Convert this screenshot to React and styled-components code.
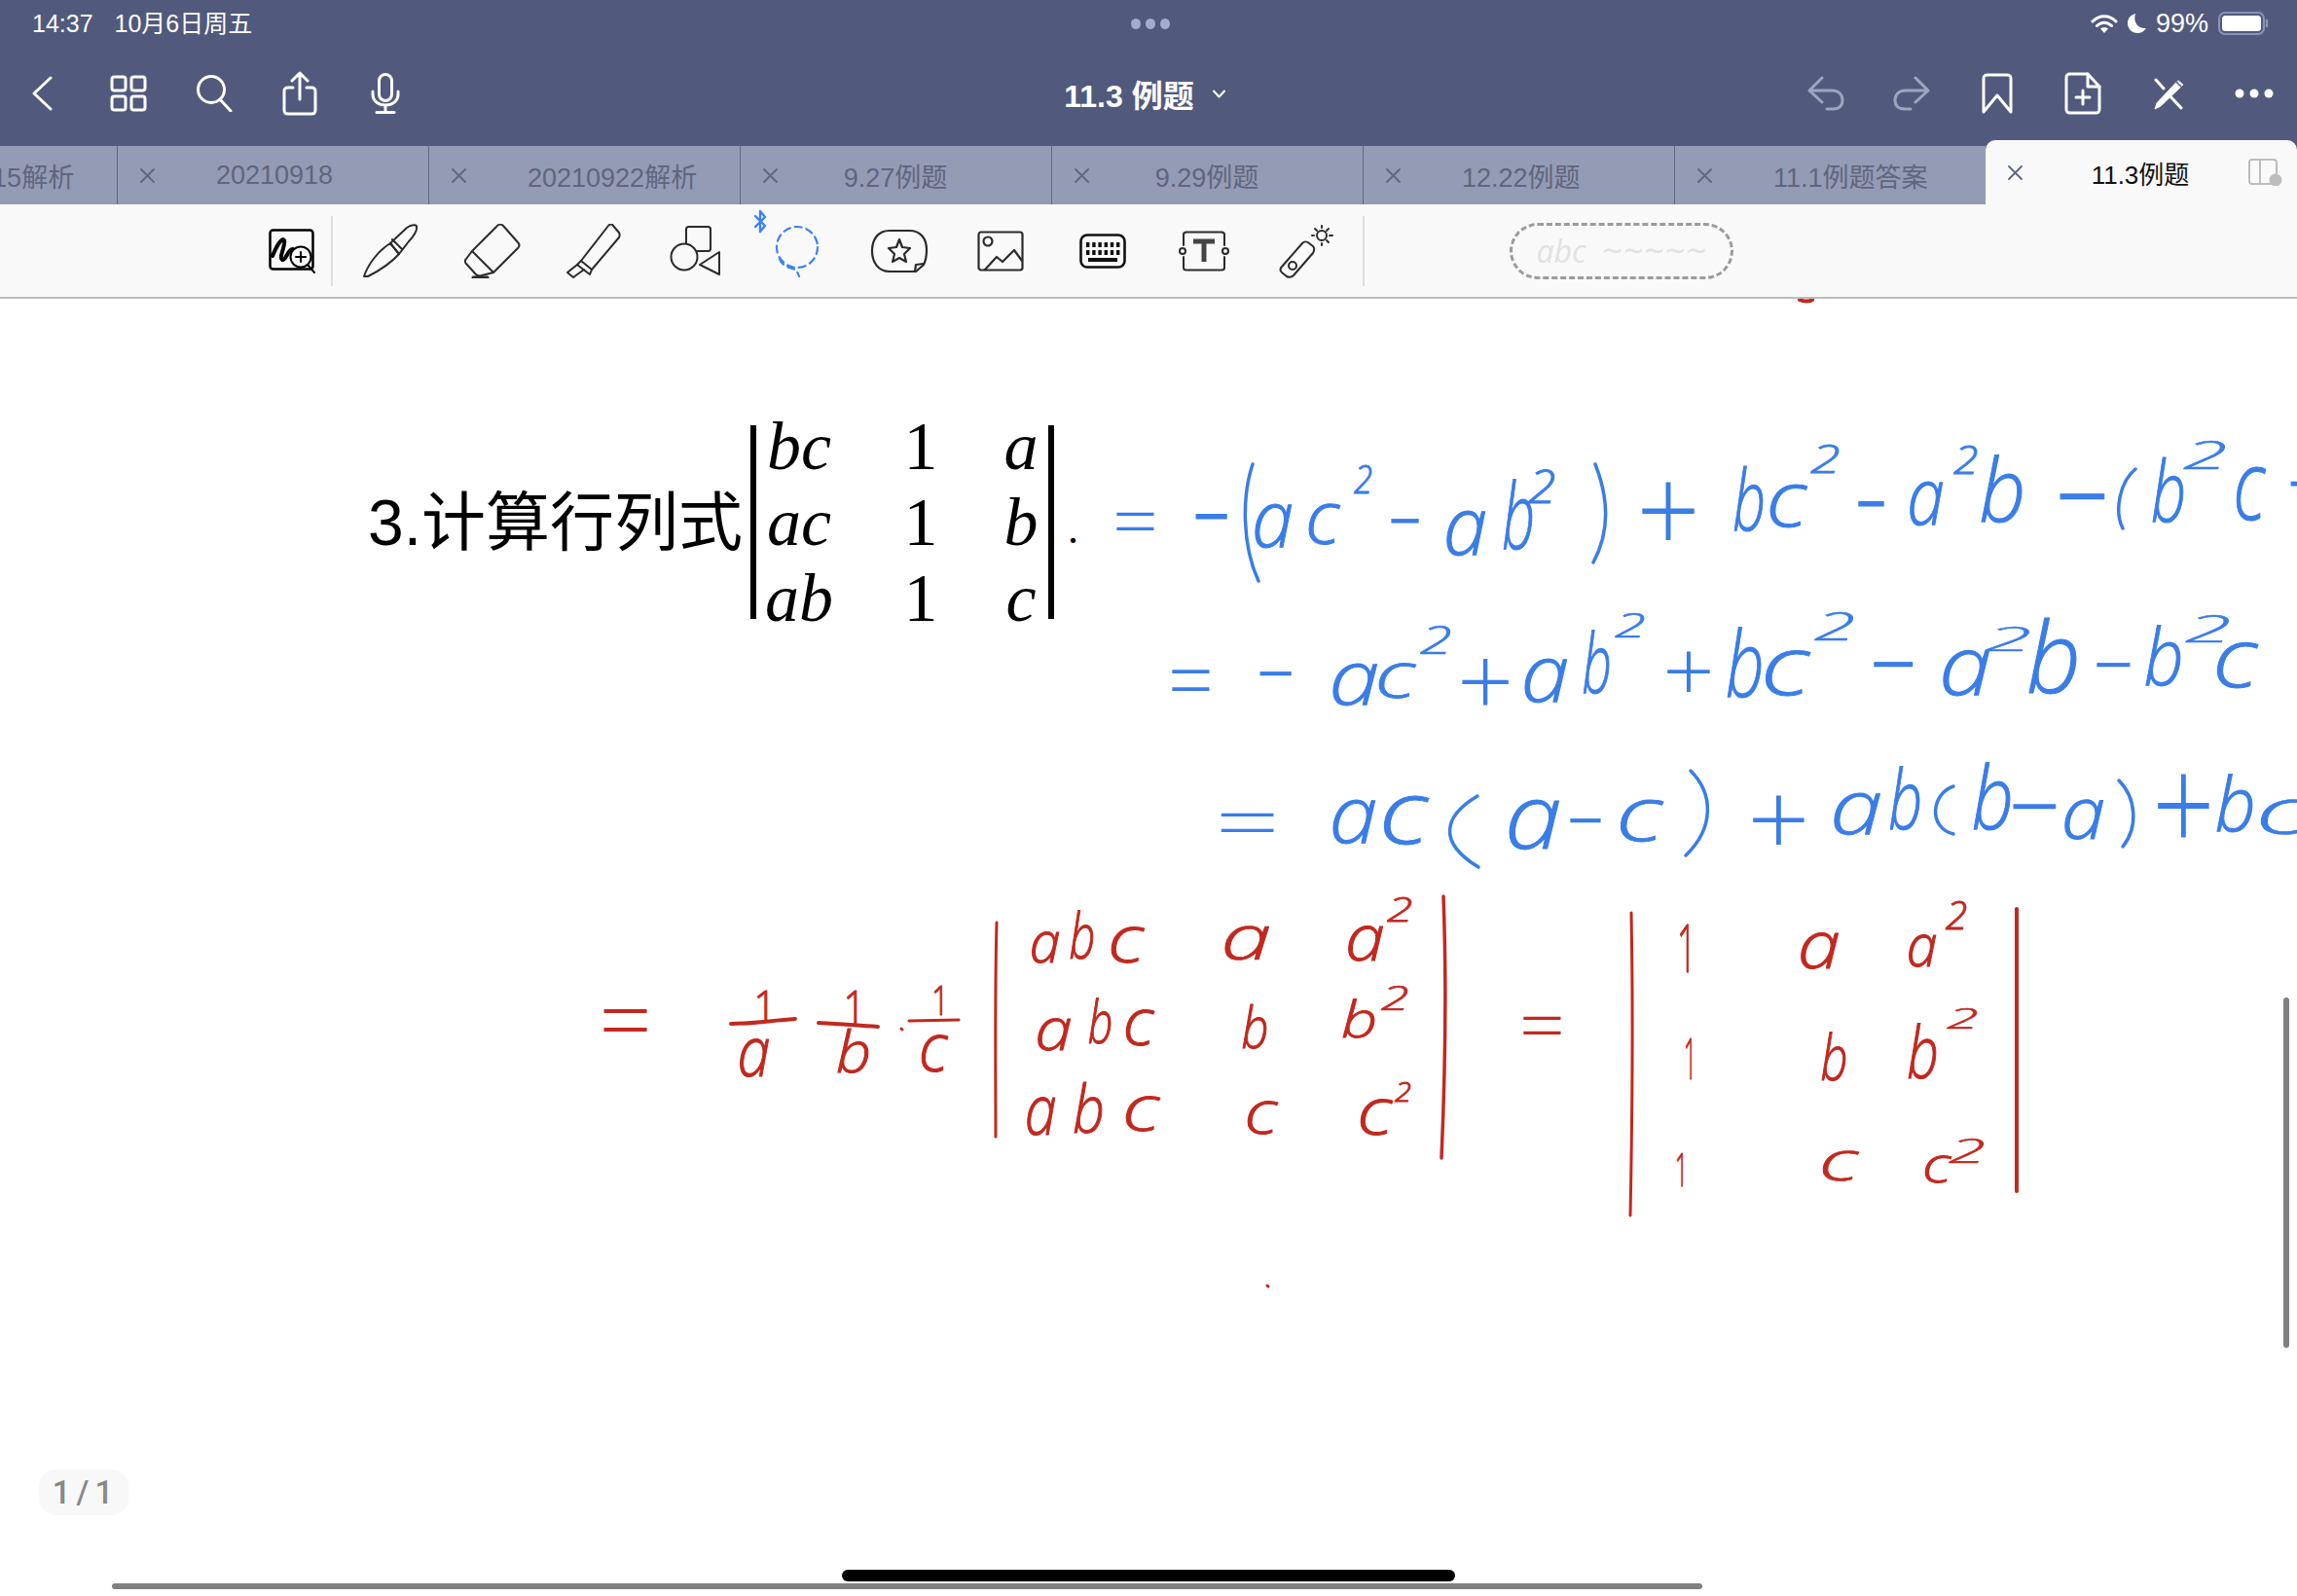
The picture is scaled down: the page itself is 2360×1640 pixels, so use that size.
import React from "react";
import styled, { createGlobalStyle } from "styled-components";

const GlobalStyle = createGlobalStyle`
  html, body { margin: 0; padding: 0; background: #fff; }
  body { font-family: "Liberation Sans", "Noto Sans CJK SC", sans-serif; }
`;

const Page = styled.div`
  position: relative;
  display: flex;
  flex-direction: column;
  width: 2360px;
  height: 1640px;
  overflow: hidden;
  background: #fff;
`;

const Header = styled.header`
  background: #515a7c;
  color: #fff;
  height: 150px;
`;

const StatusBar = styled.div`
  display: grid;
  grid-template-columns: 1fr auto 1fr;
  align-items: center;
  height: 48px;
  padding: 0 29px 0 33px;
`;

const StatusLeft = styled.div`
  display: flex;
  align-items: baseline;
  gap: 22px;
  font-size: 25px;
  line-height: 30px;
`;

const StatusRight = styled.div`
  display: flex;
  justify-content: flex-end;
  align-items: center;
  gap: 10px;
  font-size: 27px;
`;

const Grabber = styled.div`
  display: flex;
  gap: 5px;
  span {
    width: 10px;
    height: 11px;
    border-radius: 50%;
    background: #a3acd0;
  }
`;

const NavBar = styled.div`
  display: grid;
  grid-template-columns: 1fr auto 1fr;
  align-items: center;
  height: 102px;
  padding-bottom: 6px;
  box-sizing: border-box;
`;

const NavGroup = styled.div`
  display: flex;
  justify-content: ${(p) => (p.$end ? "flex-end" : "flex-start")};
`;

const NavSlot = styled.div`
  display: flex;
  align-items: center;
  justify-content: center;
  width: 88px;
  color: ${(p) => (p.$muted ? "#9ea5bf" : "#fff")};
`;

const Title = styled.div`
  display: flex;
  align-items: center;
  gap: 19px;
  margin-right: 8px;
  font-size: 32px;
  font-weight: 700;
`;

const Icon = styled.svg`
  display: block;
  flex: none;
  fill: none;
  color: ${(p) => p.$color || "inherit"};
  stroke: currentColor;
  stroke-linecap: round;
  stroke-linejoin: round;
`;

const TabRow = styled.nav`
  display: flex;
  align-items: flex-end;
  height: 60px;
  margin-left: -200px;
  background: #515a7c;
`;

const Tab = styled.div`
  display: flex;
  align-items: center;
  flex: none;
  box-sizing: border-box;
  width: 320px;
  height: ${(p) => (p.$active ? "66px" : "60px")};
  padding-left: 23px;
  background: ${(p) => (p.$active ? "#f9f9f9" : "#949bb4")};
  color: ${(p) => (p.$active ? "#111" : "#5f667d")};
  border-left: ${(p) => (p.$active ? "0" : "1px solid #5f6885")};
  border-radius: ${(p) => (p.$active ? "10px 10px 0 0" : "0")};
  font-size: ${(p) => (p.$active ? "26px" : "27px")};
  position: relative;
  z-index: ${(p) => (p.$active ? 1 : 0)};
`;

const TabLabel = styled.span`
  min-width: 116px;
  margin-left: 63px;
  text-align: center;
  white-space: nowrap;
`;

const TabAction = styled.div`
  margin-left: auto;
  margin-right: 15px;
  color: #bdbdbd;
`;

const Toolbar = styled.div`
  display: flex;
  align-items: center;
  box-sizing: border-box;
  height: 97px;
  padding-left: 276px;
  background: #f9f9f9;
  border-bottom: 2px solid #bdbdbd;
  color: #2b2b2b;
`;

const ToolSlot = styled.div`
  display: flex;
  align-items: center;
  justify-content: center;
  flex: none;
  width: 104.5px;
  position: relative;
`;

const ToolDivider = styled.div`
  flex: none;
  width: 2px;
  height: 72px;
  margin: ${(p) => p.$margin};
  background: #dedede;
`;

const BrushPreview = styled.div`
  display: flex;
  align-items: center;
  justify-content: center;
  gap: 16px;
  box-sizing: border-box;
  width: 230px;
  height: 58px;
  margin-left: 149px;
  border: 3px dashed #9b9b9b;
  border-radius: 29px;
  color: #e2e2e2;
  font: italic 400 32px "Open Sans", sans-serif;
`;

const BrushWave = styled.span`
  letter-spacing: 1px;
  font-size: 36px;
`;

const NoteCanvas = styled.main`
  position: relative;
  flex: 1;
  overflow: hidden;
  box-sizing: border-box;
  padding: 130px 0 0 378px;
`;

const Question = styled.div`
  display: flex;
  align-items: center;
  color: #000;
`;

const QuestionLabel = styled.div`
  font-size: 66px;
  line-height: 80px;
  margin-right: 8px;
  white-space: nowrap;
`;

const Determinant = styled.div`
  display: grid;
  grid-template-columns: 88px 162px 44px;
  grid-auto-rows: 78px;
  align-content: center;
  box-sizing: border-box;
  width: 312px;
  height: 199px;
  padding-right: 6px;
  border-left: 6px solid #000;
  border-right: 6px solid #000;
  font: 70px/78px "Liberation Serif", serif;
  text-align: center;
`;

const MathVar = styled.i`
  font-style: italic;
`;

const Period = styled.span`
  margin: 14px 0 0 14px;
  font: 44px/44px "Liberation Serif", serif;
`;

const InkLayer = styled.svg`
  position: absolute;
  left: 0;
  top: 0;
  width: 2360px;
  height: 1333px;
`;

const InkText = styled.text`
  font-family: "Open Sans", sans-serif;
  font-weight: 300;
  font-style: ${(p) => (p.$italic ? "italic" : "normal")};
  fill: ${(p) => p.$color};
  stroke: ${(p) => p.$color};
`;

const InkStroke = styled.path`
  fill: none;
  stroke: ${(p) => p.$color};
  stroke-width: ${(p) => p.$w || 3};
  stroke-linecap: round;
`;

const PageBadge = styled.div`
  position: absolute;
  left: 40px;
  top: 1510px;
  display: flex;
  align-items: center;
  justify-content: center;
  box-sizing: border-box;
  width: 92px;
  height: 47px;
  padding-left: 4px;
  border-radius: 18px;
  background: #f8f8f8;
  color: #888;
  font: 500 33px Roboto, sans-serif;
  letter-spacing: 6px;
`;

const VerticalScroll = styled.div`
  position: absolute;
  left: 2346px;
  top: 1025px;
  width: 6px;
  height: 360px;
  border-radius: 3px;
  background: #808080;
`;

const HorizontalScroll = styled.div`
  position: absolute;
  left: 115px;
  top: 1627px;
  width: 1634px;
  height: 6px;
  border-radius: 3px;
  background: #808080;
`;

const HomeIndicator = styled.div`
  position: absolute;
  left: 865px;
  top: 1613px;
  width: 630px;
  height: 12px;
  border-radius: 6px;
  background: #000;
`;

// ink glyphs are real text, stretched at run time to fill the box the stroke occupies
const measure = document.createElement("canvas").getContext("2d");

function InkGlyph({ t, x0, y0, x1, y1, color }) {
  const italic = /[abc2]/.test(t);
  measure.font = `${italic ? "italic " : ""}300 100px "Open Sans"`;
  const m = measure.measureText(t);
  const inkW = (m.actualBoundingBoxLeft + m.actualBoundingBoxRight) / 100;
  const inkH = (m.actualBoundingBoxAscent + m.actualBoundingBoxDescent) / 100;
  const fs = (y1 - y0) / inkH;
  const sx = (x1 - x0) / (inkW * fs);
  const ox = x0 + (m.actualBoundingBoxLeft / 100) * fs * sx;
  const oy = y1 - (m.actualBoundingBoxDescent / 100) * fs;
  // operators are heavy enough as they are, letters get a little extra weight
  const weight = /[=+]/.test(t) ? 0 : 1.1 / Math.max(sx, 1);
  return (
    <InkText
      $italic={italic}
      $color={color}
      fontSize={fs}
      strokeWidth={weight}
      transform={`translate(${ox} ${oy}) scale(${sx} 1)`}
    >
      {t}
    </InkText>
  );
}

const BLUE = "#3a7de6";
const RED = "#c1291f";

const blueInk = [
  ["=", 1147, 526, 1186, 545], ["-", 1229, 528, 1261, 533], ["a", 1289, 518, 1327, 563], ["c", 1345, 518, 1377, 560],
  ["2", 1391, 477, 1409, 507], ["-", 1430, 533, 1458, 537], ["a", 1486, 525, 1526, 571], ["b", 1545, 493, 1574, 565],
  ["2", 1570, 482, 1597, 517], ["+", 1687, 495, 1741, 555], ["b", 1782, 480, 1811, 546],
  ["c", 1819, 498, 1857, 542], ["2", 1860, 457, 1889, 486], ["-", 1910, 515, 1936, 520], ["a", 1962, 495, 1996, 540],
  ["2", 2007, 457, 2031, 487], ["b", 2036, 467, 2077, 537], ["-", 2117, 507, 2163, 513],
  ["b", 2212, 470, 2243, 537], ["2", 2243, 452, 2286, 482], ["c", 2298, 480, 2328, 535], ["-", 2354, 495, 2370, 499],

  ["=", 1204, 688, 1243, 710], ["-", 1295, 690, 1327, 694], ["a", 1369, 682, 1415, 725], ["c", 1417, 682, 1455, 718],
  ["2", 1459, 643, 1490, 672], ["+", 1502, 677, 1550, 725], ["a", 1566, 677, 1610, 722], ["b", 1627, 648, 1653, 713],
  ["2", 1659, 629, 1689, 655], ["+", 1713, 668, 1757, 710], ["b", 1775, 645, 1809, 717], ["c", 1814, 668, 1860, 715],
  ["2", 1864, 628, 1904, 658], ["-", 1926, 680, 1966, 685], ["a", 1996, 668, 2044, 715], ["2", 2039, 644, 2085, 669],
  ["b", 2085, 635, 2133, 713], ["-", 2155, 681, 2189, 685], ["b", 2205, 643, 2240, 705], ["2", 2245, 632, 2290, 660],
  ["c", 2278, 660, 2320, 707],

  ["=", 1254, 835, 1309, 855], ["a", 1369, 822, 1413, 867], ["c", 1422, 818, 1468, 868],
  ["a", 1550, 822, 1602, 873], ["-", 1614, 841, 1645, 845], ["c", 1665, 822, 1709, 865],
  ["+", 1801, 818, 1854, 868], ["a", 1884, 815, 1932, 858], ["b", 1942, 787, 1972, 853],
  ["b", 2028, 783, 2065, 853], ["-", 2069, 826, 2113, 831], ["a", 2121, 822, 2161, 863],
  ["+", 2217, 795, 2270, 860], ["b", 2278, 795, 2314, 855], ["c", 2323, 822, 2372, 858],
];

const blueBrackets = [
  "M1287 477C1276 510 1276 560 1293 597",
  "M1639 477C1652 510 1655 545 1637 578",
  "M2194 482C2178 495 2172 525 2181 543",
  "M1518 818C1484 838 1476 865 1519 891",
  "M1737 792C1760 815 1762 850 1732 879",
  "M2007 808C1985 815 1980 850 2007 857",
  "M2177 802C2195 820 2197 850 2181 870",
];

const redInk = [
  ["=", 620, 1036, 665, 1060], ["1", 778, 1017, 788, 1048], ["a", 760, 1067, 790, 1107], ["1", 870, 1017, 880, 1052],
  ["b", 861, 1057, 892, 1103], ["1", 960, 1013, 968, 1043], ["c", 947, 1063, 974, 1102],

  ["a", 1060, 958, 1088, 990], ["b", 1100, 937, 1123, 986], ["c", 1142, 953, 1176, 990], ["a", 1258, 952, 1304, 987],
  ["a", 1385, 952, 1421, 988], ["2", 1425, 922, 1450, 947],
  ["a", 1066, 1047, 1100, 1080], ["b", 1119, 1026, 1141, 1073], ["c", 1157, 1038, 1186, 1075], ["b", 1277, 1032, 1301, 1078],
  ["b", 1380, 1028, 1412, 1067], ["2", 1419, 1013, 1446, 1038],
  ["a", 1055, 1127, 1084, 1167], ["b", 1104, 1112, 1132, 1165], ["c", 1157, 1127, 1192, 1163], ["c", 1282, 1132, 1313, 1166],
  ["c", 1398, 1130, 1431, 1167], ["2", 1433, 1112, 1449, 1132],

  ["=", 1565, 1044, 1604, 1063], ["1", 1726, 950, 1735, 999], ["a", 1850, 959, 1889, 996], ["a", 1961, 961, 1989, 994],
  ["2", 1999, 925, 2020, 955], ["1", 1732, 1067, 1738, 1109], ["b", 1872, 1061, 1896, 1111], ["b", 1961, 1052, 1989, 1109],
  ["2", 2000, 1035, 2031, 1057], ["1", 1723, 1184, 1729, 1219], ["c", 1873, 1183, 1910, 1214], ["c", 1978, 1188, 2005, 1216],
  ["2", 2002, 1170, 2038, 1195],
];

const tabs = ["20210915解析", "20210918", "20210922解析", "9.27例题", "9.29例题", "12.22例题", "11.1例题答案"];

const CloseIcon = () => (
  <Icon $color="#5f667d" width="15" height="15" viewBox="0 0 15 15" strokeWidth="1.8">
    <path d="M1 1 14 14M14 1 1 14" />
  </Icon>
);

function HandZoomIcon() {
  return (
    <Icon $color="#000" width="48" height="46" viewBox="0 0 48 46">
      <rect x="1.5" y="1.5" width="44" height="40" rx="3" strokeWidth="2.5" />
      <path d="M4 28C8 18 14 8 16 12 18 16 10 30 14 32 18 33 20 20 25 21 27 22 24 30 27 31" strokeWidth="4" />
      <circle cx="33" cy="29" r="10.5" fill="#f9f9f9" strokeWidth="2" />
      <path d="M33 24V34M28 29H38" strokeWidth="2" />
      <path d="M40 37 47 45" strokeWidth="2" />
    </Icon>
  );
}

function PenIcon() {
  return (
    <Icon width="58" height="56" viewBox="0 0 58 56" strokeWidth="2">
      <path d="M2 54C6 42 16 28 29 20L38 31C28 42 14 50 6 54Z" />
      <path d="M29 20 46 4C50 1 56 0 56 3 57 7 52 14 48 18L38 31Z" />
      <path d="M31 16 41 26" />
    </Icon>
  );
}

function EraserIcon() {
  return (
    <Icon width="58" height="56" viewBox="0 0 58 56" strokeWidth="2">
      <path d="M33 3C35 0 38 0 40 2L55 19C57 21 57 23 55 25L30 50 8 28Z" />
      <path d="M8 28 2 36C0 38 1 40 2 41L12 52C13 53 16 54 18 53L30 50" />
      <path d="M9 55H24" strokeWidth="3" />
    </Icon>
  );
}

function HighlighterIcon() {
  return (
    <Icon width="58" height="56" viewBox="0 0 58 56" strokeWidth="2">
      <path d="M44 2C46 0 48 0 49 2L55 9C56 11 56 12 55 14L27 47 16 38Z" />
      <path d="M16 38 12 42 25 52 27 47" />
      <path d="M12 42 2 50 8 55 19 47" />
    </Icon>
  );
}

function ShapesIcon() {
  return (
    <Icon width="54" height="52" viewBox="0 0 54 52" strokeWidth="2">
      <rect x="17" y="1" width="25" height="25" rx="2.5" />
      <circle cx="15" cy="32" r="13.5" fill="#f9f9f9" />
      <path d="M51 27 31 40 51 50Z" />
    </Icon>
  );
}

const BluetoothMark = styled(Icon)`
  position: absolute;
  left: 7px;
  top: -16px;
`;

function LassoIcon() {
  return (
    <Icon $color="#3b82f6" width="48" height="54" viewBox="0 0 48 54" strokeWidth="2.2">
      <circle cx="24" cy="23" r="21" strokeDasharray="7 5" />
      <path d="M6 35C8 42 16 44 22 46 24 48 25 50 26 53" strokeDasharray="7 5" />
    </Icon>
  );
}

function StickerIcon() {
  return (
    <Icon width="60" height="46" viewBox="0 0 60 46" strokeWidth="2.2">
      <path d="M20 2H40C52 2 58 10 58 22 58 28 57 33 55 37L47 44H20C8 44 2 34 2 23 2 11 8 2 20 2Z" />
      <path d="M55 36 47 37 46 44" />
      <path d="M30 11 33 19 41 20 35 26 37 34 30 30 23 34 25 26 19 20 27 19Z" />
    </Icon>
  );
}

function ImageIcon() {
  return (
    <Icon width="48" height="42" viewBox="0 0 48 42" strokeWidth="2.2">
      <rect x="1.5" y="1.5" width="45" height="39" rx="2.5" />
      <circle cx="11" cy="11" r="4.5" />
      <path d="M8 40 20 27 26 32 38 20 46 31" />
    </Icon>
  );
}

function KeyboardIcon() {
  const keys = [];
  for (let i = 0; i < 6; i += 1) {
    keys.push(<rect key={`a${i}`} x={7 + i * 6.2} y="9" width="3.4" height="5" />);
    keys.push(<rect key={`b${i}`} x={7 + i * 6.2} y="17" width="3.4" height="5" />);
  }
  return (
    <Icon $color="#111" width="48" height="36" viewBox="0 0 48 36" strokeWidth="2.6">
      <rect x="1.5" y="1.5" width="45" height="33" rx="6.5" />
      <g fill="#111" stroke="none">
        {keys}
        <rect x="9" y="25" width="30" height="4" />
      </g>
    </Icon>
  );
}

function TextBoxIcon() {
  return (
    <Icon width="52" height="42" viewBox="0 0 52 42" strokeWidth="2">
      <path d="M5 15V4C5 2 6 1.500 8 1.500H44C46 1.500 47 2 47 4V15M5 27V38C5 40 6 40.500 8 40.500H44C46 40.500 47 40 47 38V27" />
      <circle cx="4" cy="21" r="3" />
      <circle cx="48" cy="21" r="3" />
      <path d="M15 11H37M26 11V32" strokeWidth="5" strokeLinecap="butt" stroke="#444" />
    </Icon>
  );
}

function LaserIcon() {
  return (
    <Icon width="56" height="56" viewBox="0 0 56 56" strokeWidth="2">
      <path d="M3 44 24 20C26 18 29 18 31 20L35 23C37 25 36 28 35 30L15 53C13 55 10 55 8 54L3 50C1 48 1 46 3 44Z" />
      <circle cx="14" cy="43" r="4" />
      <circle cx="44" cy="12" r="5" />
      <path d="M44 2V4M44 20V22M34 12H36M52 12H55M37 5 39 7M49 17 51 19M51 5 49 7" />
    </Icon>
  );
}

export default function App() {
  return (
    <Page>
      <GlobalStyle />
      <Header>
        <StatusBar>
          <StatusLeft>
            <span>14:37</span>
            <span>10月6日周五</span>
          </StatusLeft>
          <Grabber>
            <span />
            <span />
            <span />
          </Grabber>
          <StatusRight>
            <Icon width="28" height="21" viewBox="0 0 28 21" strokeWidth="3" strokeLinecap="butt">
              <path d="M2 8C9 1 19 1 26 8M6.500 12.500C11 8 17 8 21.500 12.500" />
              <path d="M14 20 10 15.500C12 13.800 16 13.800 18 15.500Z" fill="#fff" stroke="none" />
            </Icon>
            <Icon width="19" height="20" viewBox="0 0 19 20">
              <path d="M8 0C2 1.500 0 6 0 10 0 16 5 20 10 20 14 20 17 18 19 15 12 16 5 10 8 0Z" fill="#fff" stroke="none" />
            </Icon>
            <span>99%</span>
            <Icon $color="#8a93b5" width="52" height="24" viewBox="0 0 52 24" strokeWidth="2">
              <rect x="1" y="1" width="46" height="22" rx="6" />
              <rect x="4" y="4" width="40" height="16" rx="3.5" fill="#fff" stroke="none" />
              <path d="M50 9V15" strokeWidth="2.500" />
            </Icon>
          </StatusRight>
        </StatusBar>
        <NavBar>
          <NavGroup>
            <NavSlot>
              <Icon width="24" height="36" viewBox="0 0 24 36" strokeWidth="3">
                <path d="M20 2 3 18 20 34" />
              </Icon>
            </NavSlot>
            <NavSlot>
              <Icon width="38" height="38" viewBox="0 0 38 38" strokeWidth="3">
                <rect x="2" y="2" width="14" height="14" rx="2.5" />
                <rect x="22" y="2" width="14" height="14" rx="2.5" />
                <rect x="2" y="22" width="14" height="14" rx="2.5" />
                <rect x="22" y="22" width="14" height="14" rx="2.5" />
              </Icon>
            </NavSlot>
            <NavSlot>
              <Icon width="38" height="38" viewBox="0 0 38 38" strokeWidth="3">
                <circle cx="16" cy="15" r="13.500" />
                <path d="M25 25 36 37" />
              </Icon>
            </NavSlot>
            <NavSlot>
              <Icon width="36" height="46" viewBox="0 0 36 46" strokeWidth="3">
                <path d="M11 17H6C3 17 2 18 2 21V40C2 43 3 44 6 44H30C33 44 34 43 34 40V21C34 18 33 17 30 17H25" />
                <path d="M18 29V2M10 10 18 2 26 10" />
              </Icon>
            </NavSlot>
            <NavSlot>
              <Icon width="30" height="42" viewBox="0 0 30 42" strokeWidth="3">
                <rect x="8.500" y="1.500" width="13" height="27" rx="6.500" />
                <path d="M2 19V22C2 29 8 33 15 33 22 33 28 29 28 22V19M15 33V40M6 40.500H24" />
              </Icon>
            </NavSlot>
          </NavGroup>
          <Title>
            <span>11.3 例题</span>
            <Icon width="13" height="9" viewBox="0 0 13 9" strokeWidth="2">
              <path d="M1 1.500 6.500 7.500 12 1.500" />
            </Icon>
          </Title>
          <NavGroup $end>
            <NavSlot $muted>
              <Icon width="38" height="36" viewBox="0 0 38 36" strokeWidth="3">
                <path d="M15 2 2 15 15 27M2 15H25C32 15 36 19 36 25 36 31 32 34 26 34H20" />
              </Icon>
            </NavSlot>
            <NavSlot $muted>
              <Icon width="38" height="36" viewBox="0 0 38 36" strokeWidth="3">
                <path d="M23 2 36 15 23 27M36 15H13C6 15 2 19 2 25 2 31 6 34 12 34H18" />
              </Icon>
            </NavSlot>
            <NavSlot>
              <Icon width="32" height="42" viewBox="0 0 32 42" strokeWidth="3">
                <path d="M2 40V6C2 3 3 2 6 2H26C29 2 30 3 30 6V40L16 23Z" />
              </Icon>
            </NavSlot>
            <NavSlot>
              <Icon width="38" height="44" viewBox="0 0 38 44" strokeWidth="3">
                <path d="M24 2H6C3 2 2 3 2 6V38C2 41 3 42 6 42H32C35 42 36 41 36 38V15Z" />
                <path d="M24 2V15H36M19 19V33M12 26H26" />
              </Icon>
            </NavSlot>
            <NavSlot>
              <Icon width="32" height="33" viewBox="0 0 32 33" strokeWidth="3">
                <path d="M3 2 11 11M16 17 29 31" />
                <path d="M26 3 31 7 8 29 2 32 4 26Z" fill="#fff" strokeWidth="1" />
                <path d="M24 4 29 9" stroke="#515a7c" strokeWidth="1.500" />
              </Icon>
            </NavSlot>
            <NavSlot>
              <Icon width="40" height="10" viewBox="0 0 40 10">
                <circle cx="5" cy="5" r="4.500" fill="#fff" stroke="none" />
                <circle cx="20" cy="5" r="4.500" fill="#fff" stroke="none" />
                <circle cx="35" cy="5" r="4.500" fill="#fff" stroke="none" />
              </Icon>
            </NavSlot>
          </NavGroup>
        </NavBar>
      </Header>

      <TabRow>
        {tabs.map((name) => (
          <Tab key={name}>
            <CloseIcon />
            <TabLabel>{name}</TabLabel>
          </Tab>
        ))}
        <Tab $active>
          <CloseIcon />
          <TabLabel>11.3例题</TabLabel>
          <TabAction>
            <Icon width="36" height="28" viewBox="0 0 36 28" strokeWidth="2">
              <path d="M24 26H5C3 26 2 25 2 23V4C2 2 3 1 5 1H27C29 1 30 2 30 4V16M13 1V26" />
              <circle cx="29" cy="22" r="6.500" fill="#bdbdbd" stroke="none" />
            </Icon>
          </TabAction>
        </Tab>
      </TabRow>

      <Toolbar>
        <HandZoomIcon />
        <ToolDivider $margin="0 7px 0 16px" />
        <ToolSlot>
          <PenIcon />
        </ToolSlot>
        <ToolSlot>
          <EraserIcon />
        </ToolSlot>
        <ToolSlot>
          <HighlighterIcon />
        </ToolSlot>
        <ToolSlot>
          <ShapesIcon />
        </ToolSlot>
        <ToolSlot>
          <BluetoothMark $color="#3b82f6" width="14" height="25" viewBox="0 0 14 25" strokeWidth="2.4">
            <path d="M2 7 12 17 7 23V2L12 8 2 18" />
          </BluetoothMark>
          <LassoIcon />
        </ToolSlot>
        <ToolSlot>
          <StickerIcon />
        </ToolSlot>
        <ToolSlot>
          <ImageIcon />
        </ToolSlot>
        <ToolSlot>
          <KeyboardIcon />
        </ToolSlot>
        <ToolSlot>
          <TextBoxIcon />
        </ToolSlot>
        <ToolSlot>
          <LaserIcon />
        </ToolSlot>
        <ToolDivider $margin="0 0 0 6px" />
        <BrushPreview>
          <span>abc</span>
          <BrushWave>~~~~~</BrushWave>
        </BrushPreview>
      </Toolbar>

      <NoteCanvas>
        <Question>
          <QuestionLabel>3.计算行列式</QuestionLabel>
          <Determinant>
            <MathVar>bc</MathVar>
            <span>1</span>
            <MathVar>a</MathVar>
            <MathVar>ac</MathVar>
            <span>1</span>
            <MathVar>b</MathVar>
            <MathVar>ab</MathVar>
            <span>1</span>
            <MathVar>c</MathVar>
          </Determinant>
          <Period>.</Period>
        </Question>

        <InkLayer viewBox="0 307 2360 1333">
          {blueInk.map(([t, x0, y0, x1, y1], i) => (
            <InkGlyph key={i} t={t} x0={x0} y0={y0} x1={x1} y1={y1} color={BLUE} />
          ))}
          {blueBrackets.map((d) => (
            <InkStroke key={d} $color={BLUE} $w={3.5} d={d} />
          ))}
          {redInk.map(([t, x0, y0, x1, y1], i) => (
            <InkGlyph key={i} t={t} x0={x0} y0={y0} x1={x1} y1={y1} color={RED} />
          ))}
          {/* fraction bars */}
          <InkStroke $color={RED} $w={4} d="M751 1052C770 1052 790 1049 817 1047" />
          <InkStroke $color={RED} $w={4} d="M841 1051C860 1052 880 1053 902 1055" />
          <InkStroke $color={RED} $w={3} d="M934 1049 985 1048" />
          <InkStroke $color={RED} $w={3} d="M926 1057 927 1058" />
          {/* determinant bars */}
          <InkStroke $color={RED} d="M1024 948C1022 1020 1023 1100 1023 1168" />
          <InkStroke $color={RED} $w={3.5} d="M1483 921C1486 1000 1485 1100 1481 1190" />
          <InkStroke $color={RED} $w={3} d="M1676 938C1678 1040 1677 1150 1675 1249" />
          <InkStroke $color={RED} $w={4} d="M2072 934V1224" />
          <InkStroke $color={RED} $w={3} d="M1302 1321 1303 1322" />
          <InkStroke $color={RED} $w={4} d="M1849 308C1853 310 1859 310 1862 308" />
        </InkLayer>
      </NoteCanvas>

      <PageBadge>1/1</PageBadge>
      <VerticalScroll />
      <HorizontalScroll />
      <HomeIndicator />
    </Page>
  );
}
